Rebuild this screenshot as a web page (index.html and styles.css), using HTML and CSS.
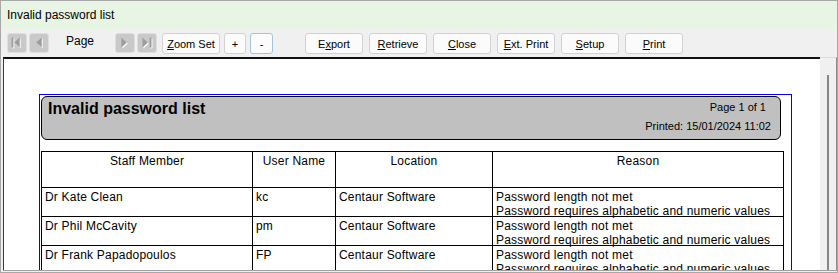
FILE: index.html
```html
<!DOCTYPE html>
<html lang="en">
<head>
    <meta charset="UTF-8">
    <title>Invalid password list</title>
    <link rel="stylesheet" href="styles.css">
</head>
<body>
    <div class="window">
        <div class="titlebar">Invalid password list</div>

        <div class="toolbar">
            <span class="nav-btn">
                <svg viewBox="0 0 20 20" width="18" height="18">
                    <g fill="#fff" transform="translate(1 1)"><rect x="4" y="4" width="2" height="11"/><path d="M13 4 L7 9.5 L13 15 Z"/></g>
                    <g fill="#9c9c9c"><rect x="4" y="4" width="2" height="11"/><path d="M13 4 L7 9.5 L13 15 Z"/></g>
                </svg>
            </span>
            <span class="nav-btn">
                <svg viewBox="0 0 20 20" width="18" height="18">
                    <path d="M13 4 L7 9.5 L13 15 Z" fill="#fff" transform="translate(1 1)"/>
                    <path d="M13 4 L7 9.5 L13 15 Z" fill="#9c9c9c"/>
                </svg>
            </span>
            <span class="page-label">Page</span>
            <span class="nav-btn">
                <svg viewBox="0 0 20 20" width="18" height="18">
                    <path d="M6 4 L12 9.5 L6 15 Z" fill="#fff" transform="translate(1 1)"/>
                    <path d="M6 4 L12 9.5 L6 15 Z" fill="#9c9c9c"/>
                </svg>
            </span>
            <span class="nav-btn">
                <svg viewBox="0 0 20 20" width="18" height="18">
                    <g fill="#fff" transform="translate(1 1)"><path d="M5 4 L11 9.5 L5 15 Z"/><rect x="13" y="4" width="2" height="11"/></g>
                    <g fill="#9c9c9c"><path d="M5 4 L11 9.5 L5 15 Z"/><rect x="13" y="4" width="2" height="11"/></g>
                </svg>
            </span>
            <button class="btn btn-zoom"><u>Z</u>oom Set</button>
            <button class="btn btn-small">+</button>
            <button class="btn btn-small btn-focus">-</button>

            <div class="actions">
                <button class="btn">E<u>x</u>port</button>
                <button class="btn"><u>R</u>etrieve</button>
                <button class="btn"><u>C</u>lose</button>
                <button class="btn"><u>E</u>xt. Print</button>
                <button class="btn"><u>S</u>etup</button>
                <button class="btn"><u>P</u>rint</button>
            </div>
        </div>

        <div class="doc">
            <div class="canvas">
                <div class="page">
                    <div class="report-head">
                        <h1>Invalid password list</h1>
                        <div class="report-meta">
                            <span class="page-no">Page 1 of 1</span>
                            <span>Printed: 15/01/2024 11:02</span>
                        </div>
                    </div>

                    <div class="report-grid">
                        <div class="cell head">Staff Member</div>
                        <div class="cell head">User Name</div>
                        <div class="cell head">Location</div>
                        <div class="cell head">Reason</div>

                        <div class="cell">Dr Kate Clean</div>
                        <div class="cell">kc</div>
                        <div class="cell">Centaur Software</div>
                        <div class="cell">Password length not met<br>Password requires alphabetic and numeric values</div>

                        <div class="cell">Dr Phil McCavity</div>
                        <div class="cell">pm</div>
                        <div class="cell">Centaur Software</div>
                        <div class="cell">Password length not met<br>Password requires alphabetic and numeric values</div>

                        <div class="cell">Dr Frank Papadopoulos</div>
                        <div class="cell">FP</div>
                        <div class="cell">Centaur Software</div>
                        <div class="cell">Password length not met<br>Password requires alphabetic and numeric values</div>
                    </div>
                </div>
            </div>
            <div class="scrollbar"><div class="thumb"></div></div>
        </div>
    </div>
</body>
</html>
```

FILE: styles.css
```css
* {
    box-sizing: border-box;
    margin: 0;
    padding: 0;
}
body {
    font-family: "Liberation Sans", Arial, sans-serif;
    background: #f0f0f0;
    color: #000;
}
/* window frame */
.window {
    width: 838px;
    height: 273px;
    border: 1px solid #a8a8a8;
    display: flex;
    flex-direction: column;
    background: #f0f0f0;
    overflow: hidden;
}
.titlebar {
    height: 28px;
    line-height: 28px;
    padding-left: 6px;
    font-size: 12px;
    background: #e8f5e5;
}
/* toolbar */
.toolbar {
    height: 28px;
    display: flex;
    align-items: flex-start;
    padding: 4px 0 0 6px;
}
.nav-btn {
    width: 20px;
    height: 20px;
    margin-right: 2px;
    border: 1px solid #dedede;
    border-radius: 3px;
    background: #c9c9c9;
    display: flex;
}
.page-label {
    width: 64px;
    padding-left: 15px;
    font-size: 12px;
    line-height: 16px;
}
.btn {
    height: 21px;
    width: 58px;
    font-family: inherit;
    font-size: 11px;
    color: #000;
    background: #fbfbfb;
    border: 1px solid #d2d2d2;
    border-radius: 3px;
}
.btn-zoom {
    margin-left: 3px;
}
.btn-small {
    width: 22px;
    margin-left: 4px;
}
.btn-focus {
    width: 23px;
    border-color: #a9c2dc;
}
.actions {
    display: flex;
    gap: 6px;
    margin-left: 32px;
}
/* document area */
.doc {
    flex: 1;
    display: flex;
    margin: 0 0 1px 2px;
    border-bottom: 1px solid #a0a0a0;
    min-height: 0;
}
.canvas {
    flex: 1;
    background: #fff;
    border-top: 2px solid #111;
    border-left: 1px solid #3a3a3a;
    padding: 35px 0 0 35px;
    overflow: hidden;
}
.scrollbar {
    width: 17px;
    border-top: 1px solid #dadada;
    border-right: 1px solid #8c8c8c;
    padding: 17px 0 0 7px;
}
.thumb {
    width: 2px;
    height: 100%;
    background: #868686;
}
/* report page */
.page {
    width: 753px;
    height: 300px;
    border: 1px solid #0000ff;
    padding: 1px 0 0 1px;
}
.report-head {
    width: 740px;
    height: 44px;
    border: 1px solid #000;
    border-radius: 6px;
    background: #c0c0c0;
    display: flex;
    justify-content: space-between;
}
.report-head h1 {
    font-size: 16px;
    font-weight: bold;
    line-height: 17px;
    padding: 3px 0 0 6px;
}
.report-meta {
    display: flex;
    flex-direction: column;
    align-items: flex-end;
    padding: 4px 9px 0 0;
    font-size: 11px;
    line-height: 13px;
}
.page-no {
    margin: 0 5px 6px 0;
}
.report-grid {
    margin-top: 11px;
    display: grid;
    grid-template-columns: 211px 83px 157px 291px;
    grid-template-rows: 36px repeat(3, 29px);
    width: 743px;
    border-right: 1px solid #000;
    font-size: 12px;
    line-height: 14px;
    letter-spacing: 0.2px;
}
.cell {
    border-left: 1px solid #000;
    border-top: 1px solid #000;
    padding: 2px 3px 0;
    white-space: nowrap;
}
.cell.head {
    text-align: center;
}
```
